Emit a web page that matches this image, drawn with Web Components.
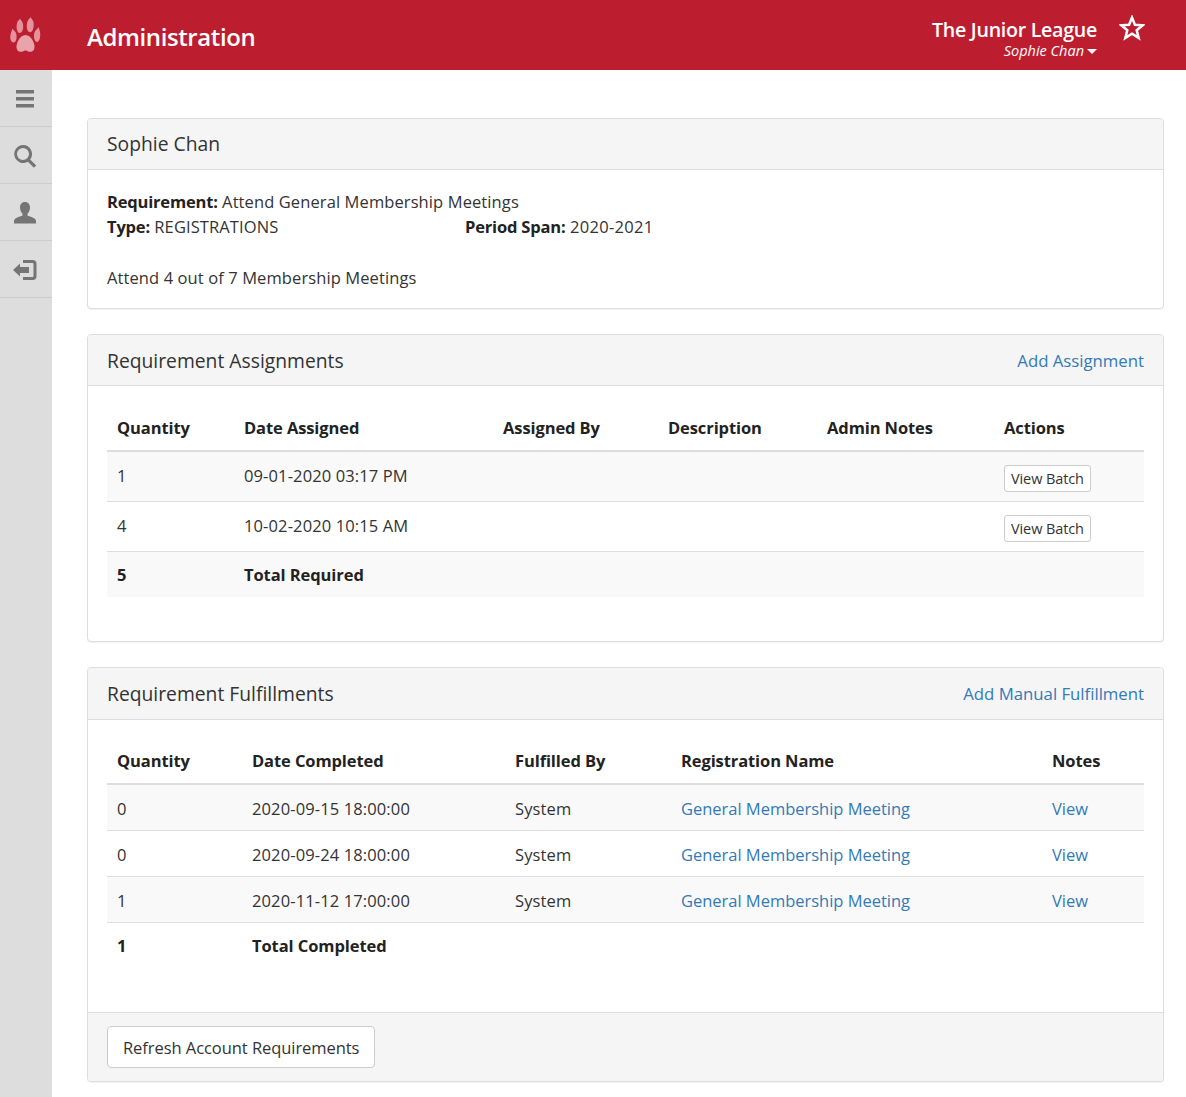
<!DOCTYPE html>
<html lang="en">
  <head>
    <meta charset="UTF-8" />
    <title>Administration</title>
    <style>
      html, body { margin: 0; padding: 0; }
      body {
        font-family: "Open Sans", "Liberation Sans", sans-serif;
        font-size: 16.5px;
        line-height: 25px;
        letter-spacing: -0.02px;
        color: #333;
        background: #fff;
      }
      .page { display: flex; min-height: 1027px; }
      main { flex: 1; padding: 48px 22px 0 35px; min-width: 0; }
      b { color: #222; letter-spacing: -0.18px; }
      .info-row { display: flex; }
      .info-row span:first-child { width: 358px; }
      .info-row span:last-child { letter-spacing: 0.3px; }
      p { margin: 26px 0 0; }
      .intro { padding-bottom: 11px; letter-spacing: 0.1px; }
    </style>
  </head>
  <body>
    <!-- top bar -->
    <template id="top-bar">
      <style>
        :host { display: flex; align-items: center; height: 70px; background: #bd1e2f; color: #fff; }
        .logo { width: 52px; height: 70px; display: block; flex: none; }
        h1 { margin: 0 0 0 35px; flex: 1; font-size: 24px; font-weight: 600; letter-spacing: -0.4px; line-height: 34px; padding-top: 3px; }
        .who { text-align: right; margin-right: 22px; }
        .org { font-size: 19.600px; font-weight: 600; line-height: 24px; letter-spacing: -0.27px; margin-top: 6px; }
        .user { font-size: 14.500px; font-style: italic; line-height: 17px; letter-spacing: 0; }
        .caret { display: inline-block; border: 5px solid transparent; border-top-color: #fff; border-bottom: 0; vertical-align: 2px; margin-left: 3px; }
        .star { margin-right: 41px; margin-bottom: 14px; display: block; }
      </style>
      <svg class="logo" viewBox="0 0 52 70" fill="#e5929c">
        <path d="M25.500 35c3 0 5.500 2 7.500 6 1.500 3 2 6 1 8.500-1 2.500-4 2.500-5.500 2-1.500-.5-2-1-3-1s-1.500.5-3 1c-1.500.5-4.500.5-5.500-2-1-2.500-.5-5.500 1-8.500 2-4 4.500-6 7.500-6z" fill="#e8a3ab" />
        <path d="M20 18.500c.5 1.500 1.500 1.500 2.500 4 1.500 4 .5 10-2.500 10.500-3 .5-4.200-6-2.800-10.500.7-2 2.300-2.500 2.800-4z" />
        <path d="M30.500 17c.5 1.500 1.800 2 2.800 4.500 1.200 4.500-.3 10.800-3.300 10.800s-4-6-2.600-10.500c.7-2.300 2.600-3.300 3.100-4.800z" />
        <path d="M12.500 28.500c.5 1.500 2.500 2 3.500 4.500 1.500 4.500 0 9.500-2.500 9.500S9.500 38.500 10.800 33.500c.5-2 1.400-3.500 1.700-5z" />
        <path d="M38.500 27c.5 1.500 1 3 1.500 5 .8 4.500-.5 10-3 10s-3.800-5.500-2.500-9.500c.8-2.500 3.500-4 4-5.500z" />
      </svg>
      <h1><slot></slot></h1>
      <div class="who">
        <div class="org"><slot name="org"></slot></div>
        <div class="user"><slot name="user"></slot><span class="caret"></span></div>
      </div>
      <svg class="star" width="26" height="26" viewBox="0 0 26 26">
        <path d="M13 2.500l2.900 7.300 7.800.5-6 5 2 7.600L13 18.700l-6.700 4.200 2-7.600-6-5 7.800-.5z" fill="none" stroke="#fff" stroke-width="2.500" />
      </svg>
    </template>

    <!-- left icon rail -->
    <template id="side-rail">
      <style>
        :host { display: block; width: 52px; flex: none; background: #ddd; }
        a { display: flex; height: 56px; align-items: center; justify-content: center; border-bottom: 1px solid #ccc; }
        svg { fill: #757575; display: block; margin-right: 2px; margin-top: 2px; }
      </style>
      <a><svg width="20" height="20" viewBox="0 0 20 20"><path d="M1 1h18v3.500H1zM1 8h18v3.500H1zM1 15h18v3.500H1z" /></svg></a>
      <a><svg width="24" height="24" viewBox="0 0 24 24"><path fill-rule="evenodd" d="M10 1a9 9 0 0 1 7.200 14.400l6 6-2.300 2.300-6-6A9 9 0 1 1 10 1zm0 3a6 6 0 1 0 0 12 6 6 0 0 0 0-12z" /></svg></a>
      <a><svg width="24" height="24" viewBox="0 0 24 24"><path d="M12 1c3.500 0 5 2.500 5 5.500 0 2.500-1 5-2.500 6.300v1.700c2 1.200 7.500 2 8.500 5v3H1v-3c1-3 6.500-3.800 8.500-5v-1.700C8 11.500 7 9 7 6.500 7 3.500 8.500 1 12 1z" /></svg></a>
      <a><svg width="26" height="22" viewBox="0 0 26 22"><path d="M1 11l7-6.500V8h9v6H8v3.500z" /><path d="M11 1h10c2 0 3.500 1.500 3.500 3.500v13c0 2-1.500 3.500-3.500 3.500H11v-3h9.500c.5 0 1-.5 1-1V5c0-.5-.5-1-1-1H11z" /></svg></a>
    </template>

    <!-- panel: heading, body, optional footer -->
    <template id="info-panel">
      <style>
        :host { display: block; border: 1px solid #ddd; border-radius: 4px; margin-bottom: 25px; background: #fff; box-shadow: 0 1px 1px rgba(0,0,0,.05); }
        header { display: flex; justify-content: space-between; align-items: center; height: var(--head, 50px); padding: 0 19px; background: #f5f5f5; border-bottom: 1px solid #ddd; border-radius: 3px 3px 0 0; }
        h2 { margin: var(--title-shift, 0) 0 0; font-size: 19.300px; font-weight: 400; color: #333; letter-spacing: 0; }
        ::slotted([slot="action"]) { color: #337ab7; text-decoration: none; font-size: 16.800px; margin-top: var(--link-shift, 1px); }
        .body { padding: var(--body-top, 19px) 19px 7px; }
        footer { display: none; padding: 13px 19px; background: #f5f5f5; border-top: 1px solid #ddd; border-radius: 0 0 3px 3px; }
        :host([has-footer]) footer { display: block; }
      </style>
      <header><h2><slot name="title"></slot></h2><slot name="action"></slot></header>
      <div class="body"><slot></slot></div>
      <footer><slot name="footer"></slot></footer>
    </template>

    <!-- table, filled from the rows property -->
    <template id="data-table">
      <style>
        :host { display: block; }
        table { width: 100%; border-collapse: collapse; table-layout: fixed; }
        th, td { text-align: left; padding: 0 10px; font-weight: 400; vertical-align: middle; }
        th { font-weight: 700; color: #222; height: 45px; letter-spacing: -0.1px; border-bottom: 2px solid #ddd; }
        td { border-top: 1px solid #ddd; height: var(--row, 47px); padding-top: var(--nudge-top, 0); padding-bottom: var(--nudge-bottom, 2px); letter-spacing: 0.12px; }
        tr:first-child td { border-top: 0; }
        tbody tr:nth-child(odd) td { background: #f9f9f9; }
        tr.total td { font-weight: 700; color: #222; height: 45px; padding: 0 10px; letter-spacing: -0.08px; }
        a { color: #337ab7; text-decoration: none; letter-spacing: -0.02px; }
        button { font: inherit; font-size: 14.500px; line-height: 20px; letter-spacing: -0.1px; padding: 3px 6px 2px; background: #fff; color: #333; border: 1px solid #ccc; border-radius: 3px; margin-top: 6px; display: block; }
      </style>
      <table><colgroup></colgroup><thead><tr></tr></thead><tbody></tbody></table>
    </template>

    <top-bar>
      Administration
      <span slot="org">The Junior League</span>
      <span slot="user">Sophie Chan</span>
    </top-bar>

    <div class="page">
      <side-rail></side-rail>
      <main>
        <info-panel style="--title-shift: -2px">
          <span slot="title">Sophie Chan</span>
          <div class="intro">
            <div><b>Requirement:</b> Attend General Membership Meetings</div>
            <div class="info-row"><span><b>Type:</b> REGISTRATIONS</span><span><b>Period Span:</b> 2020-2021</span></div>
            <p>Attend 4 out of 7 Membership Meetings</p>
          </div>
        </info-panel>

        <info-panel>
          <span slot="title">Requirement Assignments</span>
          <a slot="action">Add Assignment</a>
          <data-table id="assignments"></data-table>
          <div style="height: 37px"></div>
        </info-panel>

        <info-panel has-footer style="--head: 51px; --body-top: 18px; --title-shift: -1px; --link-shift: -1px">
          <span slot="title">Requirement Fulfillments</span>
          <a slot="action">Add Manual Fulfillment</a>
          <data-table id="fulfillments" style="--row: 43px; --nudge-top: 2px; --nudge-bottom: 0"></data-table>
          <div style="height: 37px"></div>
          <refresh-button slot="footer">Refresh Account Requirements</refresh-button>
        </info-panel>
      </main>
    </div>

    <script>
      function defineFromTemplate(name) {
        customElements.define(
          name,
          class extends HTMLElement {
            constructor() {
              super()
              let template = document.getElementById(name)
              const shadowRoot = this.attachShadow({ mode: 'open' })
              shadowRoot.appendChild(template.content.cloneNode(true))
            }
          }
        )
      }
      defineFromTemplate('top-bar')
      defineFromTemplate('side-rail')
      defineFromTemplate('info-panel')

      customElements.define(
        'refresh-button',
        class extends HTMLElement {
          constructor() {
            super()
            this.attachShadow({ mode: 'open' }).innerHTML = `
              <style>
                :host { display: inline-block; }
                button { font: inherit; letter-spacing: -0.06px; color: #333; background: #fff; border: 1px solid #ccc; border-radius: 4px; height: 42px; padding: 0 15px; }
              </style>
              <button><slot></slot></button>`
          }
        }
      )

      customElements.define(
        'data-table',
        class extends HTMLElement {
          constructor() {
            super()
            let template = document.getElementById('data-table')
            this.attachShadow({ mode: 'open' }).appendChild(template.content.cloneNode(true))
          }
          // cells that start with @ are links, # are buttons
          fill(widths, heads, rows, total) {
            const root = this.shadowRoot
            root.querySelector('colgroup').innerHTML = widths.map((w) => `<col style="width:${w}px">`).join('')
            root.querySelector('thead tr').innerHTML = heads.map((h) => `<th>${h}</th>`).join('')
            const cell = (c) => {
              if (c[0] === '@') return `<td><a>${c.slice(1)}</a></td>`
              if (c[0] === '#') return `<td><button>${c.slice(1)}</button></td>`
              return `<td>${c}</td>`
            }
            let html = rows.map((r) => `<tr>${r.map(cell).join('')}</tr>`).join('')
            html += `<tr class="total"><td>${total[0]}</td><td colspan="${heads.length - 1}">${total[1]}</td></tr>`
            root.querySelector('tbody').innerHTML = html
          }
        }
      )

      document.getElementById('assignments').fill(
        [127, 259, 165, 159, 177, 150],
        ['Quantity', 'Date Assigned', 'Assigned By', 'Description', 'Admin Notes', 'Actions'],
        [
          ['1', '09-01-2020 03:17 PM', '', '', '', '#View Batch'],
          ['4', '10-02-2020 10:15 AM', '', '', '', '#View Batch'],
        ],
        ['5', 'Total Required']
      )
      document.getElementById('fulfillments').fill(
        [135, 263, 166, 371, 102],
        ['Quantity', 'Date Completed', 'Fulfilled By', 'Registration Name', 'Notes'],
        [
          ['0', '2020-09-15 18:00:00', 'System', '@General Membership Meeting', '@View'],
          ['0', '2020-09-24 18:00:00', 'System', '@General Membership Meeting', '@View'],
          ['1', '2020-11-12 17:00:00', 'System', '@General Membership Meeting', '@View'],
        ],
        ['1', 'Total Completed']
      )
    </script>
  </body>
</html>
